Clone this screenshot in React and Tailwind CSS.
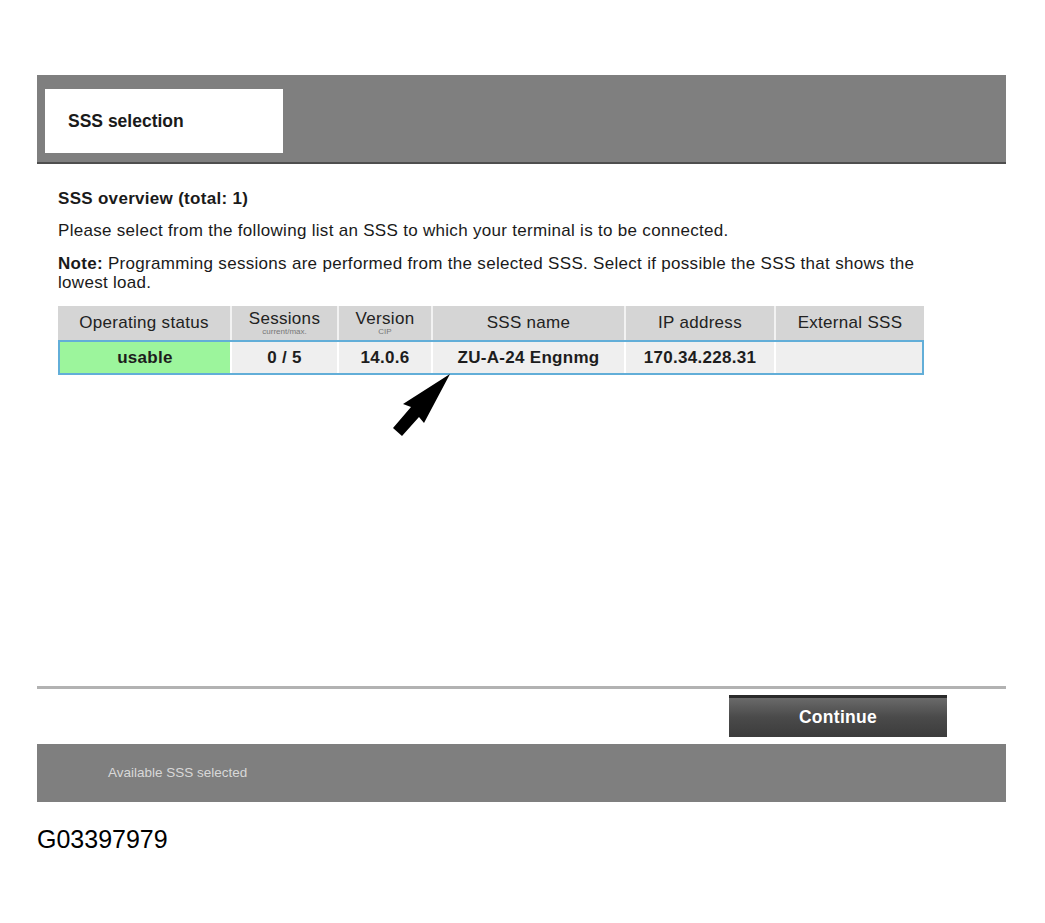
const columns = [
  { label: "Operating status", w: "w-[172px]", cell: "w-[170px]" },
  { label: "Sessions", sub: "current/max.", w: "w-[107px]", cell: "w-[107px]" },
  { label: "Version", sub: "CIP", w: "w-[94px]", cell: "w-[94px]" },
  { label: "SSS name", w: "w-[193px]", cell: "w-[193px]" },
  { label: "IP address", w: "w-[150px]", cell: "w-[150px]" },
  { label: "External SSS", w: "w-[150px]", cell: "w-[148px]" },
];

const row = ["usable", "0 / 5", "14.0.6", "ZU-A-24 Engnmg", "170.34.228.31", ""];

const Arrow = () => (
  <svg width="66" height="68" viewBox="0 0 66 68" className="absolute left-[330px] top-[65px]">
    {/* pointer arrow aimed at the selected row */}
    <polygon points="62,3 36,52 31,46 14,65 5,57 23,36 15,33" fill="#000" />
  </svg>
);

export default function App() {
  return (
    <div
      className="w-[1045px] h-[923px] bg-white pt-[75px] pl-[37px] pr-[39px]"
      style={{ fontFamily: '"Liberation Sans", Arial, sans-serif' }}
    >
      {/* Header band with tab */}
      <div className="h-[89px] bg-[#7f7f7f] border-b-[2px] border-[#4e4e4e] pt-[14px] pl-[8px]">
        <div className="w-[238px] h-[64px] bg-white flex items-center pl-[23px]">
          <span className="text-[17.5px] font-bold text-[#1a1a1a]">SSS selection</span>
        </div>
      </div>

      {/* Body */}
      <div className="h-[522px] pl-[21px] pt-[25px] text-[#1a1a1a] tracking-[0.3px]">
        <h2 className="text-[17px] font-bold leading-[19px]">SSS overview (total: 1)</h2>
        <p className="text-[17px] leading-[19px] mt-[13px]">
          Please select from the following list an SSS to which your terminal is to be connected.
        </p>
        <p className="text-[17px] leading-[19px] mt-[14px] w-[870px]">
          <span className="font-bold">Note:</span> Programming sessions are performed from the selected SSS. Select if possible the SSS that shows the lowest load.
        </p>

        <div className="relative mt-[14px] w-[866px]">
          <div className="flex h-[34px]">
            {columns.map((c, i) => (
              <div
                key={c.label}
                className={`${c.w} bg-[#d5d5d5] flex flex-col items-center justify-center ${i > 0 ? "border-l-[2px] border-[#f2f2f2]" : ""}`}
              >
                <span className="text-[17px] leading-[18px] text-[#222]">{c.label}</span>
                {c.sub && <span className="text-[8px] leading-[8px] tracking-normal text-[#777]">{c.sub}</span>}
              </div>
            ))}
          </div>
          <div className="flex h-[35px] border-[2px] border-[#62aed8]">
            {row.map((v, i) => (
              <div
                key={i}
                className={`${columns[i].cell} ${i === 0 ? "bg-[#9cf59c]" : "bg-[#efefef] border-l-[2px] border-white"} flex items-center justify-center`}
              >
                <span className="text-[17px] font-bold text-[#1d1d1d]">{v}</span>
              </div>
            ))}
          </div>
          <Arrow />
        </div>
      </div>

      {/* Action row */}
      <div className="border-t-[3px] border-[#b2b2b2] h-[58px] flex justify-end items-start pt-[6px] pr-[59px]">
        <button className="w-[218px] h-[42px] bg-gradient-to-b from-[#6a6a6a] via-[#4a4a4a] to-[#3c3c3c] border-t-[3px] border-[#2a2a2a] text-white text-[17.5px] font-bold tracking-[0.3px]">
          Continue
        </button>
      </div>

      {/* Status bar */}
      <div className="h-[58px] bg-[#7f7f7f] flex items-center pl-[71px]">
        <span className="text-[13.5px] text-[#d8d8d8]">Available SSS selected</span>
      </div>

      <div className="mt-[23px] text-[25px] leading-[28px] text-black">G03397979</div>
    </div>
  );
}
